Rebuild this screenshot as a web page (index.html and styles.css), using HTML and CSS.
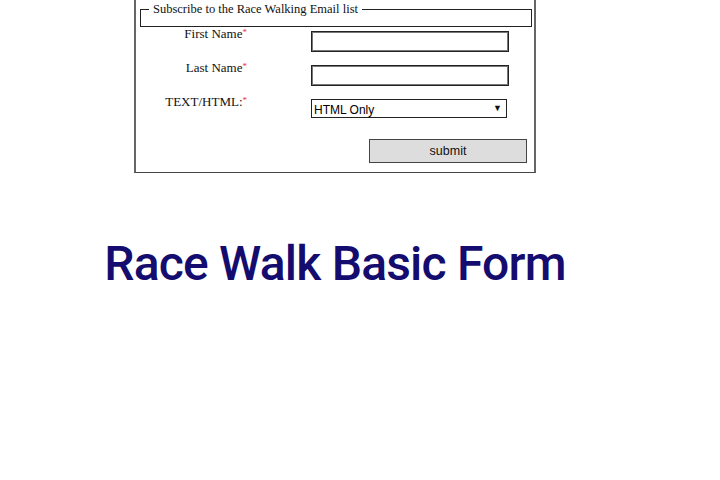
FILE: index.html
```html
<!DOCTYPE html>
<html>
<head>
<meta charset="utf-8">
<link rel="stylesheet" href="styles.css">
</head>
<body>
<div class="page">
  <form class="signup">
    <fieldset class="group">
      <legend class="group-title">Subscribe to the Race Walking Email list</legend>
    </fieldset>
    <div class="row">
      <label class="label">First Name<span class="req">*</span></label>
      <input class="field" type="text">
    </div>
    <div class="row">
      <label class="label">Last Name<span class="req">*</span></label>
      <input class="field" type="text">
    </div>
    <div class="row">
      <label class="label">TEXT/HTML:<span class="req">*</span></label>
      <div class="select-wrap">
        <select class="select"><option>HTML Only</option></select>
        <span class="arrow">&#9660;</span>
      </div>
    </div>
    <div class="actions">
      <button class="submit" type="button">submit</button>
    </div>
  </form>
  <h1 class="title">Race Walk Basic Form</h1>
</div>
</body>
</html>
```

FILE: styles.css
```css
html, body {
  margin: 0;
  padding: 0;
  background: #fff;
}
.page {
  width: 670px;
  text-align: center;
}
.signup {
  box-sizing: border-box;
  width: 402px;
  margin: -10px auto 0;
  padding: 11px 2px 9px 4px;
  border: 1px solid #444;
  border-left: 2px solid #666;
  border-right: 2px solid #666;
  text-align: left;
  font-family: "Liberation Serif", serif;
}
.group {
  margin: 0;
  padding: 0 8px 9px;
  border: 1px solid #222;
  min-width: 0;
}
.group-title {
  padding: 0 4px;
  font-size: 12.5px;
  line-height: 15px;
  color: #111;
}
.row {
  display: flex;
  height: 34px;
  align-items: flex-start;
}
.label {
  width: 107px;
  margin-top: -3px;
  text-align: right;
  font-size: 13px;
  line-height: 16px;
  color: #111;
}
.req {
  color: #e8314f;
  font-size: 9px;
  vertical-align: 3px;
}
.field {
  box-sizing: border-box;
  margin: 4px 0 0 64px;
  width: 198px;
  height: 21px;
  border: 1px solid #222;
  box-shadow: inset 0 0 0 1px #777;
  background: #fff;
  padding: 0 3px;
}
.select-wrap {
  position: relative;
  margin: 4px 0 0 64px;
  width: 196px;
  height: 19px;
}
.select {
  appearance: none;
  -webkit-appearance: none;
  box-sizing: border-box;
  width: 196px;
  height: 19px;
  border: 1px solid #222;
  border-radius: 0;
  background: #fff;
  padding: 2px 0 0 2px;
  font-family: "Liberation Sans", Arial, sans-serif;
  font-size: 12px;
  color: #000;
}
.arrow {
  position: absolute;
  right: 5px;
  top: 4px;
  font-size: 9px;
  line-height: 10px;
  color: #111;
  pointer-events: none;
}
.actions {
  display: flex;
  justify-content: flex-end;
  padding: 10px 5px 0 0;
}
.submit {
  box-sizing: border-box;
  width: 158px;
  height: 24px;
  border: 1px solid #444;
  background: #dddddd;
  font-family: "Liberation Sans", Arial, sans-serif;
  font-size: 12.5px;
  color: #111;
  padding: 0;
}
.title {
  margin: 63px 0 0;
  font-family: Roboto, sans-serif;
  font-weight: 500;
  font-size: 48px;
  line-height: 56px;
  color: #140c6e;
  letter-spacing: -0.8px;
}
```
